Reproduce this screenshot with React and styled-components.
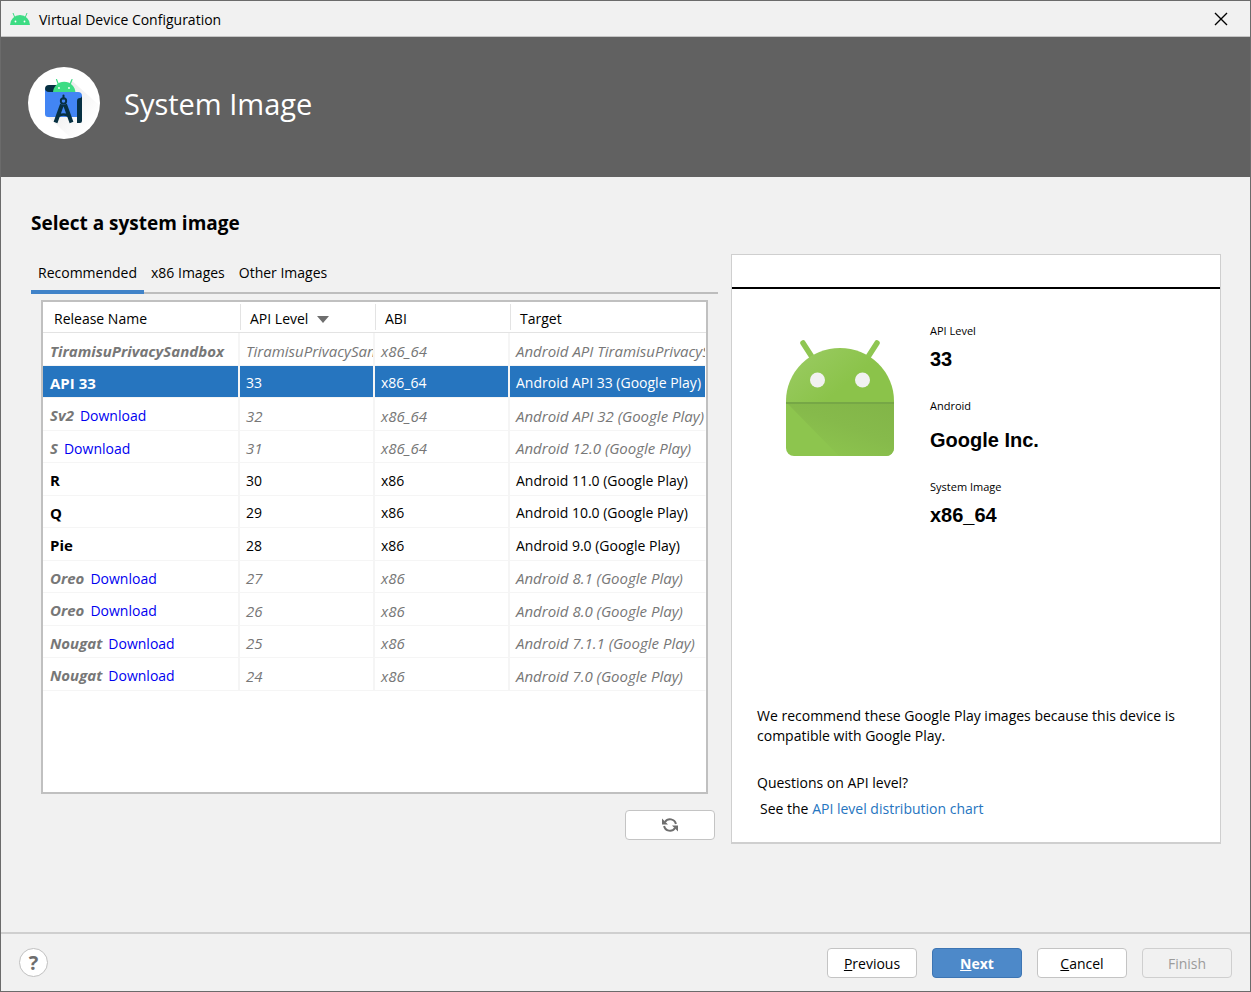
import React, { useState } from "react";
import styled, { createGlobalStyle, css } from "styled-components";

const GlobalStyle = createGlobalStyle`
  *, *::before, *::after { box-sizing: border-box; }
  body {
    margin: 0;
    background: #f1f1f1;
    color: #000;
    font: 14px/20px "Segoe UI", "Open Sans", sans-serif;
  }
  button { font: inherit; color: inherit; }
  h1, h2, p, dl, dd { margin: 0; }
`;

const Window = styled.div`
  display: flex;
  flex-direction: column;
  min-height: 100vh;
  border: 1px solid #6b6b6b;
`;

const TitleBar = styled.div`
  display: flex;
  align-items: center;
  gap: 9px;
  height: 36px;
  padding: 0 22px 0 9px;
  border-bottom: 1px solid #c4c4c4;
`;

const WindowTitle = styled.span`
  flex: 1;
  padding-top: 2px;
`;

const CloseButton = styled.button`
  display: flex;
  padding: 0;
  border: 0;
  background: none;
`;

const Banner = styled.header`
  display: flex;
  align-items: center;
  gap: 24px;
  height: 140px;
  padding: 0 27px 8px;
  background: #616161;
  color: #fff;
`;

const BannerTitle = styled.h1`
  font-size: 29px;
  line-height: 40px;
  font-weight: 400;
  padding-top: 2px;
`;

const Content = styled.main`
  flex: 1;
  padding: 32px 29px 32px 30px;
`;

const Heading = styled.h2`
  font-size: 19px;
  line-height: 28px;
  font-weight: 700;
`;

const Columns = styled.div`
  display: grid;
  grid-template-columns: minmax(0, 1fr) minmax(0, 490px);
  gap: 13px;
  align-items: start;
  margin-top: 17px;
`;

const TabList = styled.div`
  display: flex;
  height: 40px;
  border-bottom: 2px solid #bdbdbd;
`;

const Tab = styled.button`
  height: 40px;
  padding: 2px 7px 0;
  border: 0;
  border-bottom: 4px solid ${(p) => (p.$active ? "#4083c9" : "transparent")};
  background: none;
`;

const TableFrame = styled.div`
  height: 494px;
  margin: 6px 10px 16px;
  border: 2px solid #c0c0c0;
  background: #fff;
  overflow: hidden;
`;

const ImageTable = styled.table`
  width: 100%;
  table-layout: fixed;
  border-collapse: separate;
  border-spacing: 0;
`;

const HeadCell = styled.th`
  width: ${(p) => p.$width || "auto"};
  height: 31px;
  padding: 2px 0;
  border-bottom: 1px solid #e3e3e3;
  font-weight: 400;
  text-align: left;
`;

const HeadLabel = styled.div`
  display: flex;
  align-items: center;
  gap: 9px;
  height: 26px;
  padding: 4px 0 0 ${(p) => (p.$first ? 10 : 9)}px;
  border-left: 1px solid ${(p) => (p.$first ? "transparent" : "#e3e3e3")};
`;

const Cell = styled.td`
  padding: 3px 0 0 6px;
  border-bottom: 1px solid #f5f5f5;
  border-right: 2px solid #f5f5f5;
  overflow: hidden;
  white-space: nowrap;
  &:first-child { padding-left: 7px; }
  &:last-child { border-right: 1px solid #fff; }
`;

const Row = styled.tr`
  height: 32px;
  &:nth-child(odd) { height: 33px; }
  ${(p) => p.$remote && css`color: #777; font-size: 15px; font-style: italic;`}
  ${(p) => p.$selected && css`background: #2675bf; color: #fff;`}
`;

const ReleaseName = styled.strong`
  margin-right: 6px;
  font-size: 15px;
`;

const DownloadLink = styled.a`
  color: #0000f0;
  font-size: 14px;
  font-style: normal;
  text-decoration: none;
`;

const RefreshRow = styled.div`
  display: flex;
  justify-content: flex-end;
  padding-right: 3px;
`;

const variants = {
  plain: css`background: #fff; border-color: #c4c4c4;`,
  primary: css`background: #4d89c9; border-color: #3d75b3; color: #fff; font-weight: 700;`,
  disabled: css`background: #f1f1f1; border-color: #cfcfcf; color: #9b9b9b;`,
};

const Button = styled.button`
  display: flex;
  align-items: center;
  justify-content: center;
  width: 90px;
  height: 30px;
  padding: ${(p) => (p.$icon ? 0 : 2)}px 0 0;
  border: 1px solid;
  border-radius: 4px;
  ${(p) => variants[p.$variant || "plain"]}
`;

const Details = styled.aside`
  display: flex;
  flex-direction: column;
  min-height: 590px;
  border: 1px solid #cfcfcf;
  border-bottom-width: 2px;
  background: #fff;
`;

const DetailsTitle = styled.div`
  height: 34px;
  border-bottom: 2px solid #000;
`;

const Summary = styled.div`
  display: flex;
  gap: 36px;
  padding: 32px 54px 0;
`;

const RobotSlot = styled.div`
  padding-top: 18px;
`;

const Facts = styled.dl`
  display: grid;
`;

const FactName = styled.dt`
  font-size: 11px;
  line-height: 20px;
`;

const FactValue = styled.dd`
  margin-bottom: 25px;
  padding-top: ${(p) => (p.$spaced ? 12 : 6)}px;
  font: 700 20px/24px "Liberation Sans", Arial, sans-serif;
`;

const Notes = styled.div`
  margin-top: auto;
  padding: 0 25px 23px;
`;

const Question = styled.p`
  margin-top: 27px;
`;

const Answer = styled.p`
  margin-top: 6px;
  padding-left: 3px;
`;

const ChartLink = styled.a`
  color: #2675bf;
  text-decoration: none;
`;

const Footer = styled.footer`
  display: flex;
  align-items: center;
  gap: 15px;
  height: 59px;
  padding: 0 18px;
  border-top: 2px solid #cfcfcf;
`;

const HelpButton = styled.button`
  display: flex;
  align-items: center;
  justify-content: center;
  width: 29px;
  height: 29px;
  margin-right: auto;
  padding: 0;
  border: 1px solid #c0c0c0;
  border-radius: 50%;
  background: #fff;
  color: #6e6e6e;
  font-size: 20px;
  font-weight: 700;
`;

const RobotHeadIcon = () => (
  <svg width="20" height="14" viewBox="0 0 20 14" aria-hidden="true">
    <path d="M0 13a10 10 0 0 1 20 0z" fill="#3ddc84" />
    <path d="M5 6 3 1M15 6l2-5" stroke="#3ddc84" strokeWidth="1" />
    <circle cx="5.5" cy="9.5" r="0.9" fill="#fff" />
    <circle cx="14.5" cy="9.5" r="0.9" fill="#fff" />
  </svg>
);

const CloseIcon = () => (
  <svg width="14" height="14" viewBox="0 0 14 14" aria-hidden="true">
    <path d="M1 1l12 12M13 1L1 13" stroke="#000" strokeWidth="1.4" />
  </svg>
);

const StudioLogo = () => (
  <svg width="72" height="72" viewBox="0 0 72 72" aria-hidden="true">
    <defs>
      <linearGradient id="shade" x1="0" y1="0" x2="1" y2="1">
        <stop offset="0" stopColor="#d8d8d8" />
        <stop offset="0.8" stopColor="#fff" />
      </linearGradient>
    </defs>
    <circle cx="36" cy="36" r="36" fill="#fff" />
    <path d="M43 13l27 24a36 36 0 0 1-27 34L20 50z" fill="url(#shade)" opacity="0.7" />
    <path d="M17 27v-5a4 4 0 0 1 4-4h9v8z" fill="#073042" />
    <path d="M25 26a11.2 11.2 0 0 1 22.4 0z" fill="#3ddc84" />
    <path d="M30.5 17.5l-2-5M42 17.5l2-5" stroke="#3ddc84" strokeWidth="1.2" strokeLinecap="round" />
    <circle cx="31" cy="21" r="0.9" fill="#fff" />
    <circle cx="41" cy="21" r="0.9" fill="#fff" />
    <path d="M17 21q0 4 4 4h29q4 0 4 4v18q0 3-3 3H20q-3 0-3-3z" fill="#4285f4" />
    <path d="M49 56V34q0-3 3-3 2 0 2-3v26q0 2-2 2z" fill="#073042" />
    <g stroke="#073042" fill="none">
      <path d="M35.5 28.500v3" strokeWidth="2" strokeLinecap="round" />
      <circle cx="35.5" cy="34" r="2.7" strokeWidth="1.9" />
      <path d="M34 37.500L27.500 55.500M37 37.500L43.500 55.500" strokeWidth="4" />
      <path d="M31 48.5q4.5-2 9 0" strokeWidth="2.500" />
    </g>
  </svg>
);

const AndroidRobot = () => (
  <svg width="108" height="118" viewBox="0 0 108 118" aria-hidden="true">
    <defs>
      <linearGradient id="head" x1="0" y1="0" x2="1" y2="0.6">
        <stop offset="0" stopColor="#9ccc65" />
        <stop offset="0.7" stopColor="#8bc34a" />
      </linearGradient>
      <linearGradient id="fold" x1="1" y1="0" x2="0.3" y2="1">
        <stop offset="0" stopColor="#82b548" />
        <stop offset="0.5" stopColor="#86ba4b" />
        <stop offset="1" stopColor="#8dc54e" />
      </linearGradient>
    </defs>
    <path d="M17 4l9 14M91 4l-9 14" stroke="#8fc652" strokeWidth="5.500" strokeLinecap="round" />
    <path d="M0 64V62a54 53 0 0 1 108 0v2z" fill="url(#head)" />
    <path d="M0 64h108v45a8 8 0 0 1-8 8H8a8 8 0 0 1-8-8z" fill="#8dc54e" />
    <path d="M1 64h107v45a8 8 0 0 1-8 8H53z" fill="url(#fold)" />
    <path d="M0 63h108v2H0z" fill="#76a746" />
    <circle cx="31.500" cy="41" r="7.500" fill="#f1f1f1" />
    <circle cx="76.500" cy="41" r="7.500" fill="#f1f1f1" />
  </svg>
);

const SortIcon = () => (
  <svg width="12" height="7" viewBox="0 0 12 7" aria-hidden="true">
    <path d="M0 0h12L6 7z" fill="#6e6e6e" />
  </svg>
);

const RefreshIcon = () => (
  <svg width="16" height="16" viewBox="0 0 16 16" aria-hidden="true">
    <g fill="none" stroke="#6e6e6e" strokeWidth="2">
      <path d="M3 5A6 6 0 0 1 13.900 7" />
      <path d="M13 11A6 6 0 0 1 2.100 9" />
    </g>
    <path d="M0 1.500V7.500H6zM16 14.500V8.500H10z" fill="#6e6e6e" />
  </svg>
);

const images = [
  { name: "TiramisuPrivacySandbox", api: "TiramisuPrivacySandbox", abi: "x86_64", target: "Android API TiramisuPrivacySandbox (Google Play)", remote: true },
  { name: "API 33", api: "33", abi: "x86_64", target: "Android API 33 (Google Play)" },
  { name: "Sv2", api: "32", abi: "x86_64", target: "Android API 32 (Google Play)", remote: true, link: true },
  { name: "S", api: "31", abi: "x86_64", target: "Android 12.0 (Google Play)", remote: true, link: true },
  { name: "R", api: "30", abi: "x86", target: "Android 11.0 (Google Play)" },
  { name: "Q", api: "29", abi: "x86", target: "Android 10.0 (Google Play)" },
  { name: "Pie", api: "28", abi: "x86", target: "Android 9.0 (Google Play)" },
  { name: "Oreo", api: "27", abi: "x86", target: "Android 8.1 (Google Play)", remote: true, link: true },
  { name: "Oreo", api: "26", abi: "x86", target: "Android 8.0 (Google Play)", remote: true, link: true },
  { name: "Nougat", api: "25", abi: "x86", target: "Android 7.1.1 (Google Play)", remote: true, link: true },
  { name: "Nougat", api: "24", abi: "x86", target: "Android 7.0 (Google Play)", remote: true, link: true },
];

const tabs = ["Recommended", "x86 Images", "Other Images"];

export default function App() {
  const [tab, setTab] = useState(0);
  const [selected, setSelected] = useState(1);
  return (
    <>
      <GlobalStyle />
      <Window>
        <TitleBar>
          <RobotHeadIcon />
          <WindowTitle>Virtual Device Configuration</WindowTitle>
          <CloseButton aria-label="Close"><CloseIcon /></CloseButton>
        </TitleBar>
        <Banner>
          <StudioLogo />
          <BannerTitle>System Image</BannerTitle>
        </Banner>
        <Content>
          <Heading>Select a system image</Heading>
          <Columns>
            <section>
              <TabList role="tablist">
                {tabs.map((label, i) => (
                  <Tab key={label} role="tab" aria-selected={i === tab} $active={i === tab} onClick={() => setTab(i)}>
                    {label}
                  </Tab>
                ))}
              </TabList>
              <TableFrame>
                <ImageTable>
                  <thead>
                    <tr>
                      <HeadCell $width="197px"><HeadLabel $first>Release Name</HeadLabel></HeadCell>
                      <HeadCell $width="135px"><HeadLabel>API Level <SortIcon /></HeadLabel></HeadCell>
                      <HeadCell $width="135px"><HeadLabel>ABI</HeadLabel></HeadCell>
                      <HeadCell><HeadLabel>Target</HeadLabel></HeadCell>
                    </tr>
                  </thead>
                  <tbody>
                    {images.map((image, i) => (
                      <Row key={i} $remote={image.remote} $selected={i === selected} onClick={() => setSelected(i)}>
                        <Cell>
                          <ReleaseName>{image.name}</ReleaseName>
                          {image.link && <DownloadLink href="#download">Download</DownloadLink>}
                        </Cell>
                        <Cell>{image.api}</Cell>
                        <Cell>{image.abi}</Cell>
                        <Cell>{image.target}</Cell>
                      </Row>
                    ))}
                  </tbody>
                </ImageTable>
              </TableFrame>
              <RefreshRow>
                <Button $icon aria-label="Refresh"><RefreshIcon /></Button>
              </RefreshRow>
            </section>
            <Details>
              <DetailsTitle />
              <Summary>
                <RobotSlot><AndroidRobot /></RobotSlot>
                <Facts>
                  <FactName>API Level</FactName>
                  <FactValue>33</FactValue>
                  <FactName>Android</FactName>
                  <FactValue $spaced>Google Inc.</FactValue>
                  <FactName>System Image</FactName>
                  <FactValue>x86_64</FactValue>
                </Facts>
              </Summary>
              <Notes>
                <p>We recommend these Google Play images because this device is compatible with Google Play.</p>
                <Question>Questions on API level?</Question>
                <Answer>See the <ChartLink href="#distribution">API level distribution chart</ChartLink></Answer>
              </Notes>
            </Details>
          </Columns>
        </Content>
        <Footer>
          <HelpButton aria-label="Help">?</HelpButton>
          <Button><span><u>P</u>revious</span></Button>
          <Button $variant="primary"><span><u>N</u>ext</span></Button>
          <Button><span><u>C</u>ancel</span></Button>
          <Button $variant="disabled" disabled>Finish</Button>
        </Footer>
      </Window>
    </>
  );
}
